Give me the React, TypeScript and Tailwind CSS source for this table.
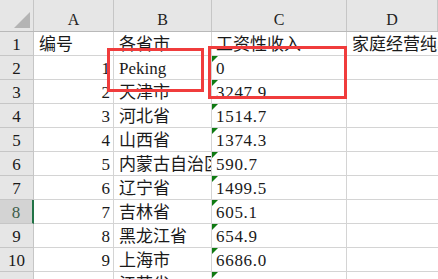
import React from "react";

const FONT = { fontFamily: '"Liberation Serif", "Noto Sans CJK SC", serif' };

const cols = ["A", "B", "C", "D"];

const rows: [string, string, string, string, string][] = [
  ["1", "编号", "各省市", "工资性收入", "家庭经营纯收入"],
  ["2", "1", "Peking", "0", ""],
  ["3", "2", "天津市", "3247.9", ""],
  ["4", "3", "河北省", "1514.7", ""],
  ["5", "4", "山西省", "1374.3", ""],
  ["6", "5", "内蒙古自治区", "590.7", ""],
  ["7", "6", "辽宁省", "1499.5", ""],
  ["8", "7", "吉林省", "605.1", ""],
  ["9", "8", "黑龙江省", "654.9", ""],
  ["10", "9", "上海市", "6686.0", ""],
  ["11", "10", "江苏省", "7350.1", ""],
];

const grid = "grid grid-cols-[34px_80px_98px_135px_1fr]";

function Flag() {
  return (
    <span className="absolute left-0 top-0 h-0 w-0 border-r-[6px] border-t-[6px] border-r-transparent border-t-[#0f7a12]" />
  );
}

export default function App() {
  return (
    <div className="relative h-[279px] w-[438px] overflow-hidden bg-white text-[17px] text-[#1a1a1a]" style={FONT}>
      {/* column headers */}
      <div className={`${grid} h-[32px] border-b border-[#b9b9b9] bg-[#e6e6e6]`}>
        <div className="relative border-r border-[#c6c6c6]">
          <span className="absolute bottom-[3px] right-[3px] h-0 w-0 border-b-[16px] border-l-[16px] border-b-[#b4b4b4] border-l-transparent" />
        </div>
        {cols.map((c) => (
          <div key={c} className="flex items-end justify-center border-r border-[#c6c6c6] pb-[3px] text-[16px] leading-none text-[#222]">
            {c}
          </div>
        ))}
      </div>

      {rows.map(([n, a, b, c, d]) => {
        const header = n === "1";
        const selected = n === "8";
        return (
          <div key={n} className={`${grid} h-[24px]`}>
            <div
              className={`flex items-end justify-center border-b pb-[2px] leading-none ${
                selected
                  ? "border-[#c6c6c6] border-r-2 border-r-[#217346] bg-[#d3d3d3] text-[#3d5e4a]"
                  : "border-[#c6c6c6] border-r bg-[#e6e6e6]"
              }`}
            >
              {n}
            </div>
            <div className={`flex items-end overflow-hidden whitespace-nowrap border-b border-r border-[#d4d4d4] pb-[2px] leading-none ${header ? "justify-start pl-[5px]" : "justify-end pr-[3px]"}`}>
              {a}
            </div>
            <div className="flex items-end overflow-hidden whitespace-nowrap border-b border-r border-[#d4d4d4] pb-[2px] pl-[5px] leading-none">
              {b}
            </div>
            <div className={`relative flex items-end overflow-hidden whitespace-nowrap border-b border-r border-[#d4d4d4] pb-[2px] pl-[4px] leading-none ${header ? "" : "tracking-[0.7px]"}`}>
              {!header && <Flag />}
              {c}
            </div>
            <div className="flex items-end whitespace-nowrap border-b border-[#d4d4d4] pb-[2px] pl-[5px] leading-none">
              {d}
            </div>
          </div>
        );
      })}

      {/* annotation boxes */}
      <div className="absolute left-[107px] top-[48px] h-[44px] w-[97px] border-[3px] border-[#f03c3c]" />
      <div className="absolute left-[208px] top-[46px] h-[53px] w-[139px] border-[3px] border-[#f03c3c]" />
    </div>
  );
}
